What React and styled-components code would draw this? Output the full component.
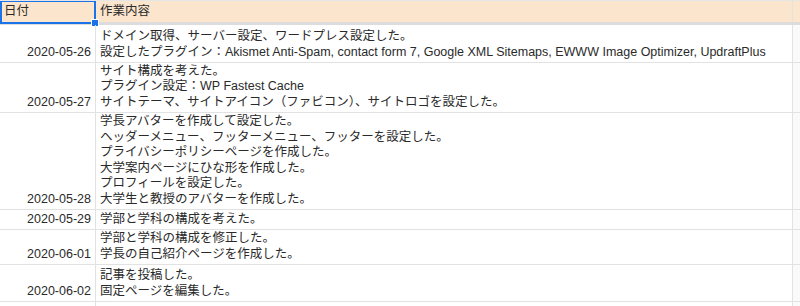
import React from 'react';
import styled, { createGlobalStyle } from 'styled-components';

const GlobalStyle = createGlobalStyle`
  body {
    margin: 0;
    background: #ffffff;
    font-family: "Liberation Sans", Arial, "Noto Sans CJK JP", sans-serif;
    color: #222;
  }
`;

const Sheet = styled.div`
  width: 800px;
  height: 306px;
  overflow: hidden;
  border-top: 1px solid #e6e6e6;
`;

const Row = styled.div`
  display: grid;
  grid-template-columns: 96px 697px 1fr;
  height: ${(p) => p.h}px;
  border-bottom: ${(p) => (p.header ? '3px solid #dcdcdc' : '1px solid #e2e2e2')};
  background: ${(p) => (p.header ? '#fce5cd' : '#ffffff')};
  font-size: 12.5px;
  line-height: 15.5px;
`;

const Cell = styled.div`
  position: relative;
  display: flex;
  flex-direction: column;
  justify-content: ${(p) => (p.header ? 'center' : 'flex-end')};
  align-items: ${(p) => (p.right ? 'flex-end' : 'flex-start')};
  padding: ${(p) => (p.header ? '0 4px' : p.right ? '0 4px 2px 0' : '0 4px 2px 4px')};
  border-right: 1px solid #e2e2e2;
  white-space: nowrap;
  color: #2a2a2a;
`;

const Spare = styled.div`
  background: ${(p) => (p.header ? '#fce5cd' : '#fafafa')};
`;

const Selection = styled.div`
  position: absolute;
  left: 0;
  top: -1px;
  right: -1px;
  bottom: -2px;
  border: 2px solid #1a73e8;
  pointer-events: none;
`;

const Handle = styled.span`
  position: absolute;
  right: -5px;
  bottom: -5px;
  width: 6px;
  height: 6px;
  background: #1a73e8;
  border: 1px solid #fff;
`;

const rows = [
  {
    date: '2020-05-26',
    h: 37,
    lines: [
      'ドメイン取得、サーバー設定、ワードプレス設定した。',
      '設定したプラグイン：Akismet Anti-Spam, contact form 7, Google XML Sitemaps, EWWW Image Optimizer, UpdraftPlus',
    ],
  },
  {
    date: '2020-05-27',
    h: 49,
    lines: [
      'サイト構成を考えた。',
      'プラグイン設定：WP Fastest Cache',
      'サイトテーマ、サイトアイコン（ファビコン）、サイトロゴを設定した。',
    ],
  },
  {
    date: '2020-05-28',
    h: 96,
    lines: [
      '学長アバターを作成して設定した。',
      'ヘッダーメニュー、フッターメニュー、フッターを設定した。',
      'プライバシーポリシーページを作成した。',
      '大学案内ページにひな形を作成した。',
      'プロフィールを設定した。',
      '大学生と教授のアバターを作成した。',
    ],
  },
  { date: '2020-05-29', h: 19, lines: ['学部と学科の構成を考えた。'] },
  {
    date: '2020-06-01',
    h: 34,
    lines: ['学部と学科の構成を修正した。', '学長の自己紹介ページを作成した。'],
  },
  {
    date: '2020-06-02',
    h: 36,
    lines: ['記事を投稿した。', '固定ページを編集した。'],
  },
];

const App = () => {
  return (
    <>
      <GlobalStyle />
      <Sheet>
        <Row header h={21}>
          <Cell header>
            日付
            <Selection>
              <Handle />
            </Selection>
          </Cell>
          <Cell header>作業内容</Cell>
          <Spare header />
        </Row>
        {rows.map((r) => (
          <Row key={r.date} h={r.h}>
            <Cell right>{r.date}</Cell>
            <Cell>
              {r.lines.map((l) => (
                <div key={l}>{l}</div>
              ))}
            </Cell>
            <Spare />
          </Row>
        ))}
        <Row h={10}>
          <Cell />
          <Cell />
          <Spare />
        </Row>
      </Sheet>
    </>
  );
};

export default App;
